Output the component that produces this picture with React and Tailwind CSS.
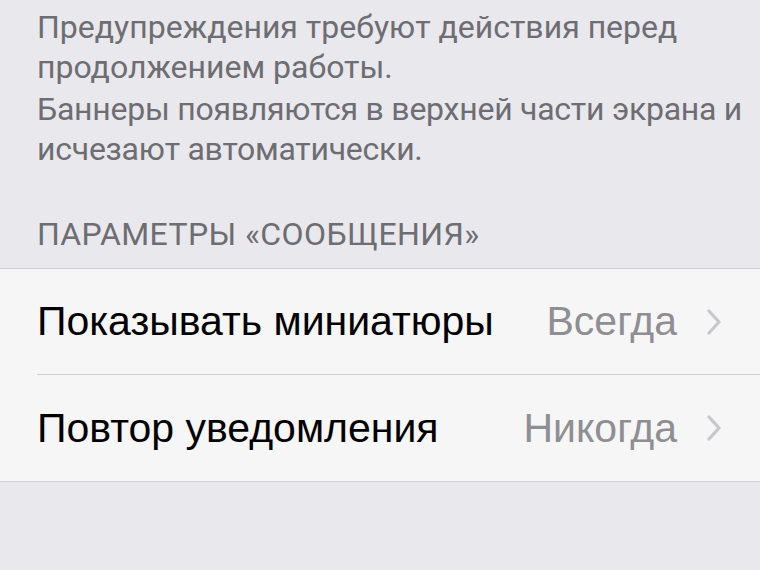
import React from 'react';

const Chevron = () => (
    <svg width="16" height="26" viewBox="0 0 16 26" className="shrink-0">
        <path d="M3 2 L13 13 L3 24" fill="none" stroke="#c7c7cc" strokeWidth="3.2" strokeLinecap="round" strokeLinejoin="round" />
    </svg>
);

const Row = ({ label, value, last }) => (
    <div className="flex items-center h-[106px] pl-[37px]">
        <div className={`flex items-center h-full flex-1 pr-[38px] ${last ? '' : 'border-b border-[#cfcfd3]'}`}>
            <span className="flex-1 text-[41px] text-black leading-none">{label}</span>
            <span className="text-[41px] text-[#8e8e93] leading-none mr-[29px]">{value}</span>
            <Chevron />
        </div>
    </div>
);

export default function App() {
    return (
        <div className="w-[760px] h-[570px] bg-[#e9e8ed] overflow-hidden" style={{ fontFamily: '"Liberation Sans", Arial, sans-serif' }}>
            <div className="pl-[37px] pt-[7px] text-[32px] leading-[40px] text-[#6d6d72] whitespace-nowrap" style={{ fontFamily: 'Roboto, sans-serif' }}>
                <p>Предупреждения требуют действия перед<br />продолжением работы.</p>
                <p className="mt-[2px] tracking-[-0.25px]">Баннеры появляются в верхней части экрана и<br />исчезают автоматически.</p>
            </div>
            <div className="px-[37px] pt-[45px] pb-[14px] text-[32px] leading-[40px] text-[#6d6d72] tracking-[0.4px]" style={{ fontFamily: 'Roboto, sans-serif' }}>
                ПАРАМЕТРЫ «СООБЩЕНИЯ»
            </div>
            <div className="bg-[#f6f6f6] border-y border-[#cfcfd3]">
                <Row label="Показывать миниатюры" value="Всегда" />
                <Row label="Повтор уведомления" value="Никогда" last />
            </div>
        </div>
    );
}
